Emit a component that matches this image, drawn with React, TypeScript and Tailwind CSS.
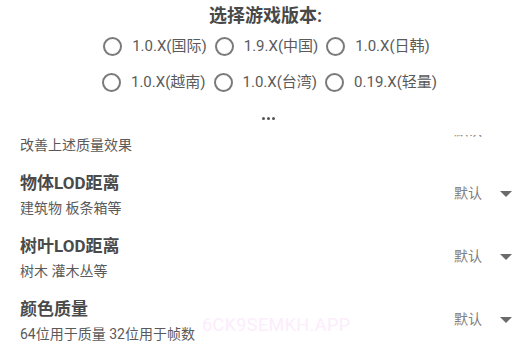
import React from "react";

const versionsTop = ["1.0.X(国际)", "1.9.X(中国)", "1.0.X(日韩)"];
const versionsBottom = ["1.0.X(越南)", "1.0.X(台湾)", "0.19.X(轻量)"];

const settings = [
  { title: "抗锯齿质量", desc: "改善上述质量效果" },
  { title: "物体LOD距离", desc: "建筑物 板条箱等" },
  { title: "树叶LOD距离", desc: "树木 灌木丛等" },
  { title: "颜色质量", desc: "64位用于质量 32位用于帧数" },
];

function Radio({ label }: { label: string }) {
  return (
    <div className="flex items-center">
      <span className="h-[19px] w-[19px] rounded-full border-2 border-[#7a7a7a]" />
      <span className="ml-[10px] text-[15px] text-[#5a5a5a]">{label}</span>
    </div>
  );
}

function SettingRow({ title, desc }: { title: string; desc: string }) {
  return (
    <div className="flex items-center pl-5 pr-[19px]">
      <div className="flex flex-1 flex-col">
        <div className="h-[22px] text-[17px] font-bold leading-[22px] text-[#4a4a4a]">{title}</div>
        <div className="mt-1 h-5 text-[14px] leading-5 text-[#5a5a5a]">{desc}</div>
      </div>
      <div className="mb-1 flex items-center">
        <span className="text-[14px] text-[#808080]">默认</span>
        <svg width="12" height="6" viewBox="0 0 12 6" className="ml-[18px] mt-[2px]">
          <path d="M0 0h12L6 6z" fill="#6b6b6b" />
        </svg>
      </div>
    </div>
  );
}

export default function App() {
  return (
    <div
      className="relative flex h-[346px] w-[531px] flex-col overflow-hidden bg-white"
      style={{ fontFamily: 'Roboto, "Noto Sans CJK SC", sans-serif' }}
    >
      <div className="flex h-[135px] shrink-0 flex-col items-center">
        <div className="mt-[6px] h-5 text-[18px] font-bold leading-5 text-[#484848]">选择游戏版本:</div>
        <div className="mt-[2px] flex h-9 items-center justify-center gap-[8px] pl-[2px]">
          {versionsTop.map((v) => (
            <Radio key={v} label={v} />
          ))}
        </div>
        <div className="flex h-9 items-center justify-center gap-[8px] pl-[8px]">
          {versionsBottom.map((v) => (
            <Radio key={v} label={v} />
          ))}
        </div>
        <div className="flex gap-[2px] pl-[5px] pt-[17px]">
          <span className="h-[3px] w-[3px] rounded-full bg-[#555]" />
          <span className="h-[3px] w-[3px] rounded-full bg-[#555]" />
          <span className="h-[3px] w-[3px] rounded-full bg-[#555]" />
        </div>
      </div>

      <div className="flex-1 overflow-hidden">
        <div className="-mt-[26px] flex flex-col gap-[17px]">
          {settings.map((s) => (
            <SettingRow key={s.title} title={s.title} desc={s.desc} />
          ))}
        </div>
      </div>

      <div className="pointer-events-none absolute left-[202px] top-[311px] text-[18px] tracking-[0.4px] text-[#fcedfc]">
        6CK9SEMKH.APP
      </div>
    </div>
  );
}
